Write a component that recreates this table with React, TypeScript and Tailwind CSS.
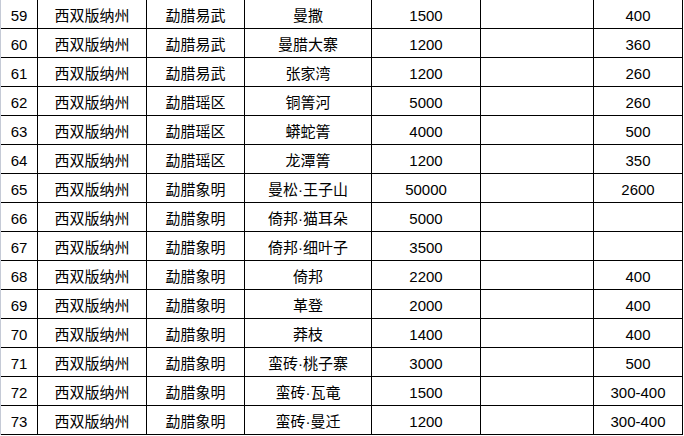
import React from "react";

const rows: [string, string, string, string, string, string, string][] = [
  ["59", "西双版纳州", "勐腊易武", "曼撒", "1500", "", "400"],
  ["60", "西双版纳州", "勐腊易武", "曼腊大寨", "1200", "", "360"],
  ["61", "西双版纳州", "勐腊易武", "张家湾", "1200", "", "260"],
  ["62", "西双版纳州", "勐腊瑶区", "铜箐河", "5000", "", "260"],
  ["63", "西双版纳州", "勐腊瑶区", "蟒蛇箐", "4000", "", "500"],
  ["64", "西双版纳州", "勐腊瑶区", "龙潭箐", "1200", "", "350"],
  ["65", "西双版纳州", "勐腊象明", "曼松·王子山", "50000", "", "2600"],
  ["66", "西双版纳州", "勐腊象明", "倚邦·猫耳朵", "5000", "", ""],
  ["67", "西双版纳州", "勐腊象明", "倚邦·细叶子", "3500", "", ""],
  ["68", "西双版纳州", "勐腊象明", "倚邦", "2200", "", "400"],
  ["69", "西双版纳州", "勐腊象明", "革登", "2000", "", "400"],
  ["70", "西双版纳州", "勐腊象明", "莽枝", "1400", "", "400"],
  ["71", "西双版纳州", "勐腊象明", "蛮砖·桃子寨", "3000", "", "500"],
  ["72", "西双版纳州", "勐腊象明", "蛮砖·瓦竜", "1500", "", "300-400"],
  ["73", "西双版纳州", "勐腊象明", "蛮砖·曼迁", "1200", "", "300-400"],
];

const widths = ["w-[37px]", "w-[109px]", "w-[98px]", "w-[127px]", "w-[109px]", "w-[113px]", "w-[89px]"];

export default function App() {
  return (
    <div
      className="w-[684px] h-[436px] bg-white overflow-hidden text-black text-[15px]"
      style={{ fontFamily: '"Liberation Sans", "Noto Sans CJK SC", sans-serif' }}
    >
      <div className="w-[683px] border-l border-[#c5cad6]">
        {rows.map((r, i) => (
          <div key={i} className="flex h-[29px] border-b border-black">
            {r.map((c, j) => (
              <div
                key={j}
                className={`${widths[j]} shrink-0 border-r border-black flex items-center justify-center pt-[3px] whitespace-nowrap leading-none`}
              >
                {c}
              </div>
            ))}
          </div>
        ))}
      </div>
    </div>
  );
}
